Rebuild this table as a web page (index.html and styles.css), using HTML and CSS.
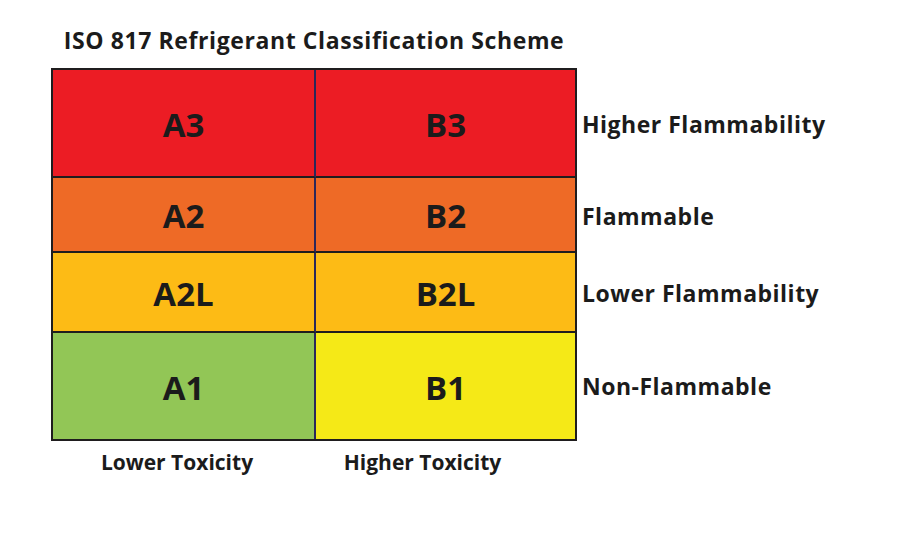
FILE: index.html
```html
<!DOCTYPE html>
<html lang="en">
<head>
<meta charset="utf-8">
<title>ISO 817 Refrigerant Classification Scheme</title>
<link rel="stylesheet" href="styles.css">
</head>
<body>
<div class="page">
  <h1 class="title">ISO 817 Refrigerant Classification Scheme</h1>
  <div class="chart">
    <div class="matrix">
      <div class="cell a r1 red">A3</div>
      <div class="cell b r1 red">B3</div>
      <div class="cell a r2 orange">A2</div>
      <div class="cell b r2 orange">B2</div>
      <div class="cell a r3 amber">A2L</div>
      <div class="cell b r3 amber">B2L</div>
      <div class="cell a r4 green">A1</div>
      <div class="cell b r4 yellow">B1</div>
    </div>
    <div class="levels">
      <div class="level">Higher Flammability</div>
      <div class="level">Flammable</div>
      <div class="level">Lower Flammability</div>
      <div class="level">Non-Flammable</div>
    </div>
  </div>
  <div class="axis">
    <div class="axis-label lower">Lower Toxicity</div>
    <div class="axis-label higher">Higher Toxicity</div>
  </div>
</div>
</body>
</html>
```
FILE: styles.css
```css
html, body {
  margin: 0;
  padding: 0;
  background: #ffffff;
}

body {
  width: 900px;
  height: 550px;
  overflow: hidden;
  font-family: "Open Sans", "Lato", "Liberation Sans", sans-serif;
  font-weight: 700;
  color: #1b1b1b;
}

.page {
  padding: 27px 0 0 51px;
}

.title {
  margin: 0;
  width: 526px;
  text-align: center;
  font-size: 23px;
  line-height: 26px;
  letter-spacing: 0.6px;
  font-weight: 700;
}

.chart {
  display: flex;
  margin-top: 15px;
}

.matrix {
  display: grid;
  grid-template-columns: 263px 259px;
  grid-template-rows: 108px 75px 80px 106px;
  border: 2px solid #1f1d1e;
}

.cell {
  box-sizing: border-box;
  display: flex;
  align-items: center;
  justify-content: center;
  font-size: 33px;
  line-height: 1;
  padding-top: 2px;
}

.cell.a {
  border-right: 2px solid #2b285a;
}

.cell.r1, .cell.r2, .cell.r3 {
  border-bottom: 2px solid #1f1d1e;
}

.red { background: #ec1c24; }
.orange { background: #ee6a26; }
.amber { background: #fdbb15; }
.green { background: #92c656; }
.yellow { background: #f5e917; }

.levels {
  display: grid;
  grid-template-rows: 108px 75px 80px 106px;
  padding: 2px 0 2px 5px;
}

.level {
  display: flex;
  align-items: center;
  font-size: 23px;
  line-height: 26px;
  letter-spacing: 0.5px;
}

.axis {
  display: grid;
  grid-template-columns: 265px 261px;
  margin-top: 8px;
}

.axis-label {
  text-align: center;
  font-size: 21px;
  line-height: 26px;
}

.axis-label.lower {
  padding-right: 13px;
}

.axis-label.higher {
  padding-right: 48px;
}
```
